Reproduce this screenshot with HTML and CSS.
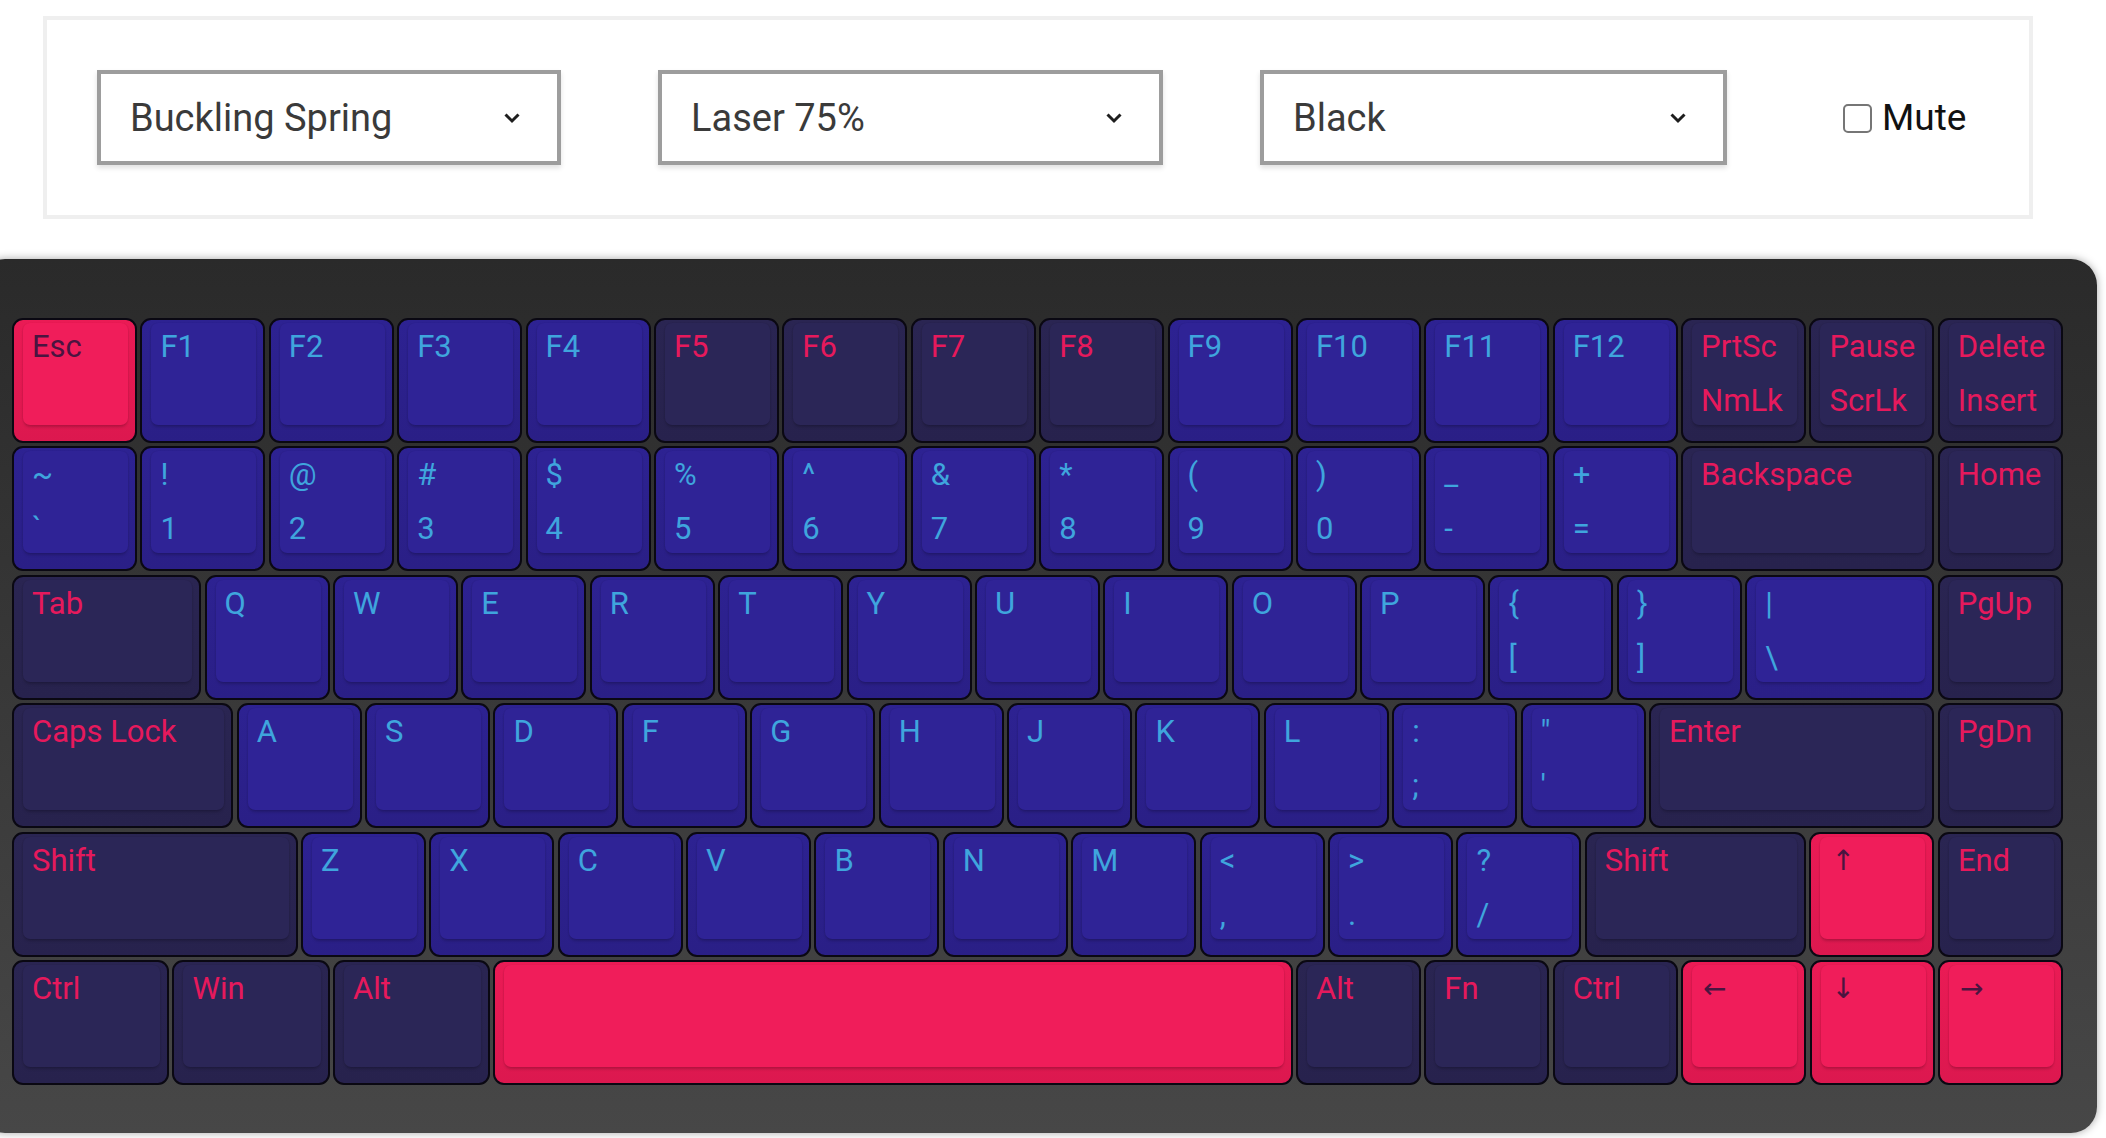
FILE: index.html
```html
<!DOCTYPE html>
<html>
<head>
<meta charset="utf-8">
<title>Keyboard</title>
<link rel="stylesheet" href="styles.css">
</head>
<body>
<div class="controls">
  <div class="select s1"><span>Buckling Spring</span><svg class="chev" width="18" height="12" viewBox="0 0 18 12"><path d="M2.5 2.5 L9 9 L15.5 2.5" fill="none" stroke="#1e1e1e" stroke-width="3"/></svg></div>
  <div class="select s2"><span>Laser 75%</span><svg class="chev" width="18" height="12" viewBox="0 0 18 12"><path d="M2.5 2.5 L9 9 L15.5 2.5" fill="none" stroke="#1e1e1e" stroke-width="3"/></svg></div>
  <div class="select s3"><span>Black</span><svg class="chev" width="18" height="12" viewBox="0 0 18 12"><path d="M2.5 2.5 L9 9 L15.5 2.5" fill="none" stroke="#1e1e1e" stroke-width="3"/></svg></div>
  <label class="mute"><input type="checkbox"><span>Mute</span></label>
</div>

<div class="keyboard">
  <div class="rows">
    <div class="row">
      <div class="key accent"><div class="cap"><span>Esc</span></div></div>
      <div class="key alpha"><div class="cap"><span>F1</span></div></div>
      <div class="key alpha"><div class="cap"><span>F2</span></div></div>
      <div class="key alpha"><div class="cap"><span>F3</span></div></div>
      <div class="key alpha"><div class="cap"><span>F4</span></div></div>
      <div class="key mod"><div class="cap"><span>F5</span></div></div>
      <div class="key mod"><div class="cap"><span>F6</span></div></div>
      <div class="key mod"><div class="cap"><span>F7</span></div></div>
      <div class="key mod"><div class="cap"><span>F8</span></div></div>
      <div class="key alpha"><div class="cap"><span>F9</span></div></div>
      <div class="key alpha"><div class="cap"><span>F10</span></div></div>
      <div class="key alpha"><div class="cap"><span>F11</span></div></div>
      <div class="key alpha"><div class="cap"><span>F12</span></div></div>
      <div class="key mod"><div class="cap"><span>PrtSc</span><span>NmLk</span></div></div>
      <div class="key mod"><div class="cap"><span>Pause</span><span>ScrLk</span></div></div>
      <div class="key mod"><div class="cap"><span>Delete</span><span>Insert</span></div></div>
    </div>
    <div class="row">
      <div class="key alpha"><div class="cap"><span>~</span><span>`</span></div></div>
      <div class="key alpha"><div class="cap"><span>!</span><span>1</span></div></div>
      <div class="key alpha"><div class="cap"><span>@</span><span>2</span></div></div>
      <div class="key alpha"><div class="cap"><span>#</span><span>3</span></div></div>
      <div class="key alpha"><div class="cap"><span>$</span><span>4</span></div></div>
      <div class="key alpha"><div class="cap"><span>%</span><span>5</span></div></div>
      <div class="key alpha"><div class="cap"><span>^</span><span>6</span></div></div>
      <div class="key alpha"><div class="cap"><span>&amp;</span><span>7</span></div></div>
      <div class="key alpha"><div class="cap"><span>*</span><span>8</span></div></div>
      <div class="key alpha"><div class="cap"><span>(</span><span>9</span></div></div>
      <div class="key alpha"><div class="cap"><span>)</span><span>0</span></div></div>
      <div class="key alpha"><div class="cap"><span>_</span><span>-</span></div></div>
      <div class="key alpha"><div class="cap"><span>+</span><span>=</span></div></div>
      <div class="key mod w2"><div class="cap"><span>Backspace</span></div></div>
      <div class="key mod"><div class="cap"><span>Home</span></div></div>
    </div>
    <div class="row">
      <div class="key mod w15"><div class="cap"><span>Tab</span></div></div>
      <div class="key alpha"><div class="cap"><span>Q</span></div></div>
      <div class="key alpha"><div class="cap"><span>W</span></div></div>
      <div class="key alpha"><div class="cap"><span>E</span></div></div>
      <div class="key alpha"><div class="cap"><span>R</span></div></div>
      <div class="key alpha"><div class="cap"><span>T</span></div></div>
      <div class="key alpha"><div class="cap"><span>Y</span></div></div>
      <div class="key alpha"><div class="cap"><span>U</span></div></div>
      <div class="key alpha"><div class="cap"><span>I</span></div></div>
      <div class="key alpha"><div class="cap"><span>O</span></div></div>
      <div class="key alpha"><div class="cap"><span>P</span></div></div>
      <div class="key alpha"><div class="cap"><span>{</span><span>[</span></div></div>
      <div class="key alpha"><div class="cap"><span>}</span><span>]</span></div></div>
      <div class="key alpha w15"><div class="cap"><span>|</span><span>\</span></div></div>
      <div class="key mod"><div class="cap"><span>PgUp</span></div></div>
    </div>
    <div class="row">
      <div class="key mod w175"><div class="cap"><span>Caps Lock</span></div></div>
      <div class="key alpha"><div class="cap"><span>A</span></div></div>
      <div class="key alpha"><div class="cap"><span>S</span></div></div>
      <div class="key alpha"><div class="cap"><span>D</span></div></div>
      <div class="key alpha"><div class="cap"><span>F</span></div></div>
      <div class="key alpha"><div class="cap"><span>G</span></div></div>
      <div class="key alpha"><div class="cap"><span>H</span></div></div>
      <div class="key alpha"><div class="cap"><span>J</span></div></div>
      <div class="key alpha"><div class="cap"><span>K</span></div></div>
      <div class="key alpha"><div class="cap"><span>L</span></div></div>
      <div class="key alpha"><div class="cap"><span>:</span><span>;</span></div></div>
      <div class="key alpha"><div class="cap"><span>"</span><span>'</span></div></div>
      <div class="key mod w225"><div class="cap"><span>Enter</span></div></div>
      <div class="key mod"><div class="cap"><span>PgDn</span></div></div>
    </div>
    <div class="row">
      <div class="key mod w225"><div class="cap"><span>Shift</span></div></div>
      <div class="key alpha"><div class="cap"><span>Z</span></div></div>
      <div class="key alpha"><div class="cap"><span>X</span></div></div>
      <div class="key alpha"><div class="cap"><span>C</span></div></div>
      <div class="key alpha"><div class="cap"><span>V</span></div></div>
      <div class="key alpha"><div class="cap"><span>B</span></div></div>
      <div class="key alpha"><div class="cap"><span>N</span></div></div>
      <div class="key alpha"><div class="cap"><span>M</span></div></div>
      <div class="key alpha"><div class="cap"><span>&lt;</span><span>,</span></div></div>
      <div class="key alpha"><div class="cap"><span>&gt;</span><span>.</span></div></div>
      <div class="key alpha"><div class="cap"><span>?</span><span>/</span></div></div>
      <div class="key mod w175"><div class="cap"><span>Shift</span></div></div>
      <div class="key accent"><div class="cap"><span class="arrow">↑</span></div></div>
      <div class="key mod"><div class="cap"><span>End</span></div></div>
    </div>
    <div class="row">
      <div class="key mod w125"><div class="cap"><span>Ctrl</span></div></div>
      <div class="key mod w125"><div class="cap"><span>Win</span></div></div>
      <div class="key mod w125"><div class="cap"><span>Alt</span></div></div>
      <div class="key accent w625"><div class="cap"></div></div>
      <div class="key mod"><div class="cap"><span>Alt</span></div></div>
      <div class="key mod"><div class="cap"><span>Fn</span></div></div>
      <div class="key mod"><div class="cap"><span>Ctrl</span></div></div>
      <div class="key accent"><div class="cap"><span class="arrow">←</span></div></div>
      <div class="key accent"><div class="cap"><span class="arrow">↓</span></div></div>
      <div class="key accent"><div class="cap"><span class="arrow">→</span></div></div>
    </div>
  </div>
</div>
</body>
</html>
```

FILE: styles.css
```css
* { box-sizing: border-box; }
html, body { margin: 0; padding: 0; background: #fff; overflow: hidden; }
body { font-family: Roboto, "Noto Sans", "DejaVu Sans", sans-serif; width: 2106px; height: 1138px; }

.controls {
  margin: 16px 0 0 43px;
  width: 1990px;
  height: 203px;
  border: 4px solid #efefef;
  padding: 0 50px;
  display: flex;
  align-items: center;
  gap: 97px;
  background: #fff;
}
.select {
  height: 95px;
  border: 4px solid #9d9d9d;
  display: flex;
  align-items: center;
  justify-content: space-between;
  padding: 0 36px 0 29px;
  font-size: 38px;
  color: #3a3a3a;
  background: #fff;
  box-shadow: 0 3px 5px rgba(0, 0, 0, 0.12);
}
.s1 { width: 464px; }
.s2 { width: 505px; }
.s3 { width: 467px; }
.chev { display: block; }
.mute {
  margin-left: 19px;
  display: flex;
  align-items: center;
  font-size: 37px;
  color: #111;
}
.mute input {
  appearance: none;
  -webkit-appearance: none;
  width: 29px;
  height: 29px;
  border: 2px solid #767676;
  border-radius: 5px;
  margin: 2px 10px 0 0;
  background: #fff;
}

.keyboard {
  margin: 40px 0 0 -21px;
  width: 2118px;
  height: 874px;
  padding: 59px 33px 48px;
  background: linear-gradient(#2a2a2a, #474747);
  border-radius: 26px;
  box-shadow: 0 0 8px rgba(0, 0, 0, 0.35);
}
.rows { display: flex; flex-direction: column; gap: 3.4px; }
.row { display: flex; gap: 3.4px; }

.key {
  --w: 1;
  width: calc(var(--w) * 128.4px - 3.4px);
  height: 125px;
  flex: none;
  border: 2px solid #0a0812;
  border-radius: 11px;
  padding: 3px 7px 16px 9px;
  display: flex;
}
.w125 { --w: 1.25; }
.w15 { --w: 1.5; }
.w175 { --w: 1.75; }
.w2 { --w: 2; }
.w225 { --w: 2.25; }
.w625 { --w: 6.25; }

.cap {
  flex: 1;
  border-radius: 7px;
  padding: 8px 9px 0;
  font-size: 31px;
  line-height: 31px;
  box-shadow: 0 3px 3px -1px rgba(0, 0, 0, 0.2), -1px 0 1px rgba(0, 0, 0, 0.05), 1px 0 1px rgba(0, 0, 0, 0.05);
}
.cap span { display: block; white-space: nowrap; }
.cap span + span { margin-top: 23px; }
.cap .arrow { font-size: 28px; padding-left: 2px; }

.alpha { background: linear-gradient(#2d2292, #2a1f86); }
.alpha .cap { background: #2f2396; color: #3fa5dd; }

.mod { background: linear-gradient(#2a2552, #27224d); }
.mod .cap { background: #2b2657; color: #e6195c; }

.accent { background: linear-gradient(#ea1b55, #dc184f); }
.accent .cap { background: #f01d5a; color: #4a1440; }
```
